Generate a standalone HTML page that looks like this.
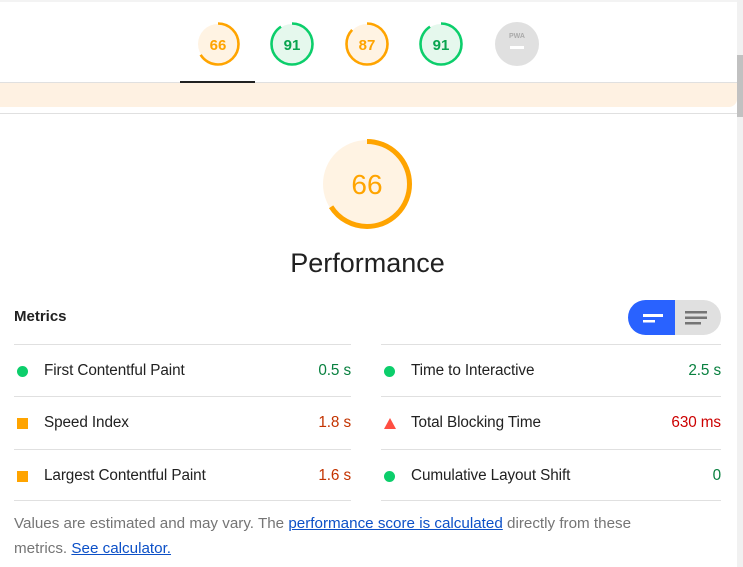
<!DOCTYPE html>
<html><head><meta charset="utf-8"><style>
*{margin:0;padding:0;box-sizing:border-box}
body{width:743px;height:567px;overflow:hidden;background:#fff;font-family:"Liberation Sans","NanumGothic",sans-serif;color:#212121;position:relative}
.abs{position:absolute}
.sb{left:737px;top:0;width:6px;height:567px;background:#f1f1f1}
.thumb{left:737px;top:55px;width:6px;height:62px;background:#c1c1c1}
.row{position:absolute;height:52px;display:flex;align-items:center;font-size:15.3px;letter-spacing:-0.1px}
.row .v{margin-left:auto}
.line{position:absolute;height:1px;background:#e0e0e0}
a{color:#0c50c7;text-decoration:underline}
.dot{width:11px;height:11px;margin:0 16px 0 3px;flex:none}
</style></head><body>
<div class="abs" style="left:0;top:0;width:737px;height:2px;background:#f3f3f3"></div>
<div class="abs sb"></div><div class="abs thumb"></div>
<svg class="abs" style="left:0;top:0" width="737" height="120">
 <g stroke-width="2.6">
  <circle cx="218" cy="44" r="20" fill="#fff3e3"/>
  <circle cx="218" cy="44" r="20.5" fill="none" stroke="#ffa400" stroke-dasharray="85 200" transform="rotate(-90 218 44)"/>
  <circle cx="292" cy="44" r="20" fill="#e5f8ed"/>
  <circle cx="292" cy="44" r="20.5" fill="none" stroke="#0cce6b" stroke-dasharray="117 200" transform="rotate(-90 292 44)"/>
  <circle cx="367" cy="44" r="20" fill="#fff3e3"/>
  <circle cx="367" cy="44" r="20.5" fill="none" stroke="#ffa400" stroke-dasharray="112 200" transform="rotate(-90 367 44)"/>
  <circle cx="441" cy="44" r="20" fill="#e5f8ed"/>
  <circle cx="441" cy="44" r="20.5" fill="none" stroke="#0cce6b" stroke-dasharray="117 200" transform="rotate(-90 441 44)"/>
  <circle cx="517" cy="44" r="22" fill="#e0e0e0"/>
  <rect x="510" y="46" width="14" height="3" fill="#fff"/>
 </g>
 <g font-family="Liberation Sans,sans-serif" font-weight="bold" font-size="15" text-anchor="middle">
  <text x="218" y="50" fill="#ffa400">66</text>
  <text x="292" y="50" fill="#08a54f">91</text>
  <text x="367" y="50" fill="#ffa400">87</text>
  <text x="441" y="50" fill="#08a54f">91</text>
  <text x="517" y="38" fill="#aaa" font-size="7">PWA</text>
 </g>
 <rect x="0" y="82" width="737" height="1" fill="#e0e0e0"/>
 <rect x="180" y="81" width="75" height="2" fill="#212121"/>
 <path d="M0 83H737V99a8 8 0 0 1-8 8H0Z" fill="#fef1e2"/>
 <rect x="0" y="113" width="737" height="1" fill="#e0e0e0"/>
</svg>
<svg class="abs" style="top:134px;left:316px" width="102" height="102">
 <circle cx="51" cy="50" r="44" fill="#fff3e3"/>
 <circle cx="51" cy="50" r="42.5" fill="none" stroke="#ffa400" stroke-width="5" stroke-dasharray="176 400" transform="rotate(-90 51 50)"/>
 <text x="51" y="60" text-anchor="middle" font-family="Liberation Sans,sans-serif" font-size="28" fill="#ffa400">66</text>
</svg>
<div class="abs" style="left:0;width:735px;top:248px;text-align:center;font-size:27px;color:#212121">Performance</div>
<div class="abs" style="left:14px;top:308px;font-size:15px;font-weight:bold">Metrics</div>
<svg class="abs" style="left:628px;top:300px" width="93" height="35">
 <path d="M17.5 0H47V35H17.5a17.5 17.5 0 0 1 0-35Z" fill="#2962ff"/>
 <path d="M47 0H75.5a17.5 17.5 0 0 1 0 35H47Z" fill="#e0e0e0"/>
 <rect x="15" y="14" width="20" height="3" fill="#fff"/><rect x="15" y="20" width="12" height="2.5" fill="#fff"/>
 <rect x="57" y="11" width="22" height="2.5" fill="#757575"/><rect x="57" y="16.5" width="22" height="2.5" fill="#757575"/><rect x="57" y="22" width="16" height="2.5" fill="#757575"/>
</svg>
<div class="line" style="left:14px;width:337px;top:344px"></div>
<div class="line" style="left:381px;width:340px;top:344px"></div>
<div class="line" style="left:14px;width:337px;top:396px"></div>
<div class="line" style="left:381px;width:340px;top:396px"></div>
<div class="line" style="left:14px;width:337px;top:449px"></div>
<div class="line" style="left:381px;width:340px;top:449px"></div>
<div class="line" style="left:14px;width:337px;top:500px"></div>
<div class="line" style="left:381px;width:340px;top:500px"></div>
<div class="row" style="left:14px;width:337px;top:345px"><span class="dot" style="border-radius:50%;background:#0cce6b"></span>First Contentful Paint<span class="v" style="color:#08803f">0.5 s</span></div>
<div class="row" style="left:14px;width:337px;top:397px"><span class="dot" style="background:#ffa400"></span>Speed Index<span class="v" style="color:#c33300">1.8 s</span></div>
<div class="row" style="left:14px;width:337px;top:450px"><span class="dot" style="background:#ffa400"></span>Largest Contentful Paint<span class="v" style="color:#c33300">1.6 s</span></div>
<div class="row" style="left:381px;width:340px;top:345px"><span class="dot" style="border-radius:50%;background:#0cce6b"></span>Time to Interactive<span class="v" style="color:#08803f">2.5 s</span></div>
<div class="row" style="left:381px;width:340px;top:397px"><svg width="12" height="11" style="margin:0 15px 0 3px;flex:none"><path d="M6 0L12 11H0Z" fill="#ff4e42"/></svg>Total Blocking Time<span class="v" style="color:#c00">630 ms</span></div>
<div class="row" style="left:381px;width:340px;top:450px"><span class="dot" style="border-radius:50%;background:#0cce6b"></span>Cumulative Layout Shift<span class="v" style="color:#08803f">0</span></div>
<div class="abs" style="left:14px;top:511px;width:640px;font-size:15.2px;line-height:25px;color:#757575">Values are estimated and may vary. The <a>performance score is calculated</a> directly from these metrics. <a>See calculator.</a></div>
</body></html>
